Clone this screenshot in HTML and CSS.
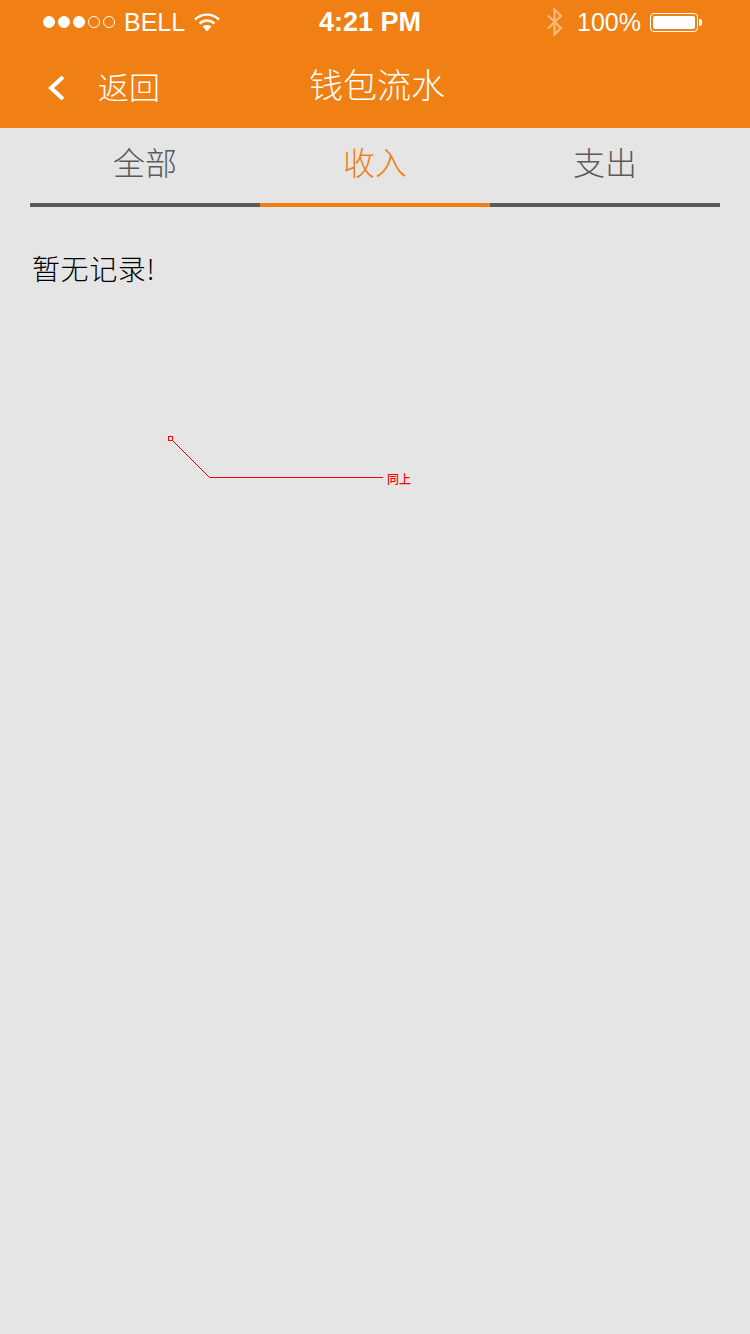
FILE: index.html
```html
<!DOCTYPE html>
<html lang="zh-CN">
<head>
  <meta charset="UTF-8" />
  <meta name="viewport" content="width=device-width,initial-scale=1" />
  <title>钱包流水</title>
  <link rel="stylesheet" href="styles.css">
</head>
<body>
  <div class="page">

    <!-- Orange header: status bar + nav -->
    <header class="header">
      <div class="status">
        <div class="status-left">
          <span class="signal">
            <i class="dot on"></i><i class="dot on"></i><i class="dot on"></i><i class="dot"></i><i class="dot"></i>
          </span>
          <span class="carrier">BELL</span>
          <svg class="wifi" width="26" height="20" viewBox="0 0 26 20">
            <path d="M1 7.500C8 1 18 1 25 7.500" fill="none" stroke="#fff" stroke-width="2.400"/>
            <path d="M5.500 11.500C10 7.500 16 7.500 20.500 11.500" fill="none" stroke="#fff" stroke-width="2.400"/>
            <path d="M8.500 14.500L13 19.500L17.500 14.500C15 12.500 11 12.500 8.500 14.500Z" fill="#fff"/>
          </svg>
        </div>
        <div class="clock">4:21 PM</div>
        <div class="status-right">
          <svg class="bt" width="18" height="28" viewBox="0 0 18 28">
            <path d="M2 7.500L15 20L8.500 26.500V1.500L15 8L2 20.500" fill="none" stroke="#fff" stroke-opacity=".45" stroke-width="2.200"/>
          </svg>
          <span class="pct">100%</span>
          <span class="battery"><span class="battery-fill"></span></span>
          <span class="battery-nub"></span>
        </div>
      </div>
      <nav class="nav">
        <div class="back">
          <svg width="18" height="26" viewBox="0 0 18 26">
            <path d="M16 2L4 13L16 24" fill="none" stroke="#fff" stroke-width="4"/>
          </svg>
          <span class="back-text">返回</span>
        </div>
        <h1 class="title">钱包流水</h1>
      </nav>
    </header>

    <!-- Tabs -->
    <div class="tabs">
      <div class="tab">全部</div>
      <div class="tab active">收入</div>
      <div class="tab">支出</div>
    </div>

    <p class="empty">暂无记录!</p>

    <!-- Red annotation left on the screenshot -->
    <div class="note">
      <svg class="note-line" width="216" height="46" viewBox="0 0 216 46">
        <rect x="1.500" y="1.500" width="4" height="4" fill="none" stroke="#f00"/>
        <path d="M5.500 5.500L42.500 42.500H216" fill="none" stroke="#f00"/>
      </svg>
      <span class="note-text">同上</span>
    </div>

  </div>
</body>
</html>
```

FILE: styles.css
```css
body { margin: 0; background: #e5e5e5; font-family: "Noto Sans CJK SC", "Liberation Sans", sans-serif; font-weight: 300; }
.page { position: relative; width: 750px; height: 1334px; overflow: hidden; }

/* Header */
.header { background: #f08014; color: #fff; height: 128px; }

.status {
  height: 44px;
  display: flex; justify-content: space-between; align-items: center;
  padding: 0 48px 0 43px;
  font-family: "Liberation Sans", Arial, sans-serif;
  font-size: 25px;
  font-weight: normal;
  position: relative;
}
.status-left, .status-right { display: flex; align-items: center; }
.signal { display: flex; gap: 3px; }
.dot {
  width: 12px; height: 12px; box-sizing: border-box;
  border: 1px solid #fff; border-radius: 50%;
}
.dot.on { background: #fff; }
.carrier { margin-left: 9px; }
.wifi { margin-left: 9px; }
.clock { position: absolute; left: 319px; top: 7px; font-size: 27px; font-weight: bold; line-height: 31px; }
.bt { margin-right: 13px; }
.pct { margin-right: 9px; }
.battery {
  width: 48px; height: 19px; box-sizing: border-box;
  border: 1px solid #fff; border-radius: 4px; padding: 2px;
  display: block;
}
.battery-fill { display: block; height: 100%; background: #fff; border-radius: 2px; }
.battery-nub { width: 3px; height: 7px; background: #fff; border-radius: 0 2px 2px 0; margin-left: 1px; }

.nav { height: 84px; display: flex; align-items: center; position: relative; }
.back { display: flex; align-items: center; padding-left: 47px; margin-top: 4px; }
.back-text { font-size: 31px; margin-left: 33px; position: relative; top: -3px; }
.title {
  position: absolute; left: 309px; top: 15px;
  margin: 0; font-size: 34px; font-weight: 300; line-height: 50px;
}

/* Tabs */
.tabs { display: flex; margin: 0 30px; }
.tab {
  flex: 1; height: 75px; line-height: 66px;
  text-align: center; font-size: 32px; color: #5a5a5a;
  border-bottom: 4px solid #5a5a5a;
}
.tab.active { color: #f08014; border-bottom-color: #f08014; }

.empty { margin: 39px 0 0 32px; font-size: 28px; letter-spacing: .6px; line-height: 44px; color: #000; }

/* Annotation */
.note { position: absolute; left: 167px; top: 435px; }
.note-line { display: block; }
.note-text {
  position: absolute; left: 220px; top: 35px;
  font-size: 12px; font-weight: 500; line-height: 18px; color: #f00; white-space: nowrap;
}
```
